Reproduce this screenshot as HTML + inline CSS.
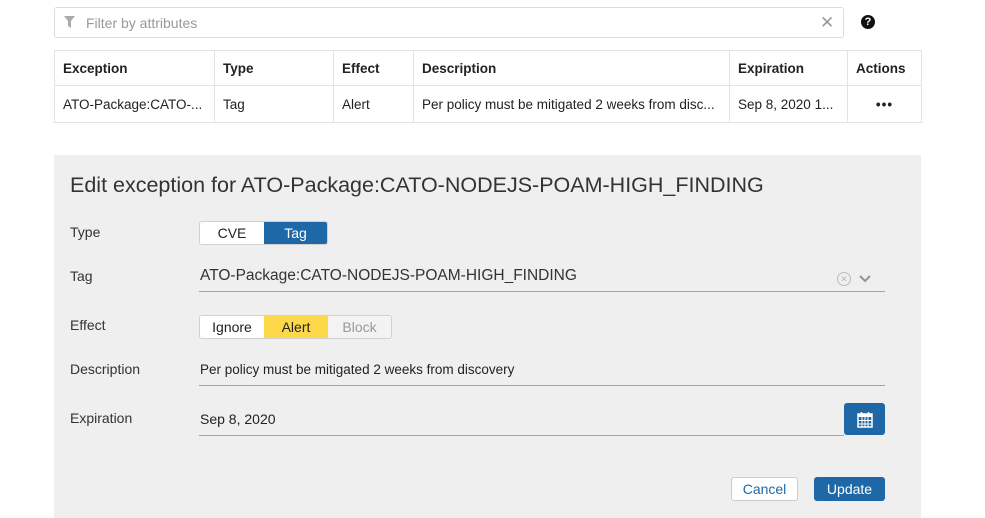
<!DOCTYPE html>
<html><head><style>
*{box-sizing:border-box;margin:0;padding:0}
body{width:985px;height:518px;background:#fff;font-family:"Liberation Sans",sans-serif;color:#222;position:relative;overflow:hidden;font-size:14px}
.a{position:absolute}
.filter{left:54px;top:7px;width:790px;height:31px;border:1px solid #dcdcdc;border-radius:3px}
table{position:absolute;left:54px;top:50px;width:867px;border-collapse:collapse;font-size:13.5px;table-layout:fixed}
td,th{border:1px solid #e3e3e3;padding:0 8px;height:37px;text-align:left;white-space:nowrap;overflow:hidden}
th{font-weight:bold;height:35px}
.panel{left:54px;top:155px;width:867px;height:363px;background:#efefef}
.lbl{left:70px;font-size:14px;color:#333}
.seg{display:flex;border:1px solid #d0d0d0;border-radius:3px;background:#fff;height:24px;font-size:14px;overflow:hidden}
.seg div{display:flex;align-items:center;justify-content:center}
.line{height:1px;background:#9aa5ad;left:199px}
.btn{border-radius:3px;display:flex;align-items:center;justify-content:center;font-size:14px}
</style></head><body>
<div class="a filter"></div>
<svg class="a" style="left:64px;top:16px" width="11" height="12" viewBox="0 0 11 12"><path d="M0 0H11L7 5V12L4 10V5Z" fill="#aaa"/></svg>
<div class="a" style="left:86px;top:15px;color:#999;font-size:14px">Filter by attributes</div>
<div class="a" style="left:820px;top:13px;color:#999;font-size:17px">✕</div>
<div class="a" style="left:861px;top:15px;width:14px;height:14px;border-radius:50%;background:#111;color:#fff;font-size:11px;font-weight:bold;text-align:center;line-height:14px">?</div>
<table>
<colgroup><col style="width:160px"><col style="width:119px"><col style="width:80px"><col style="width:316px"><col style="width:118px"><col style="width:74px"></colgroup>
<tr><th>Exception</th><th>Type</th><th>Effect</th><th>Description</th><th>Expiration</th><th>Actions</th></tr>
<tr><td>ATO-Package:CATO-...</td><td>Tag</td><td>Alert</td><td>Per policy must be mitigated 2 weeks from disc...</td><td>Sep 8, 2020 1...</td><td style="text-align:center;font-weight:bold;letter-spacing:1px">•••</td></tr>
</table>
<div class="a panel"></div>
<div class="a" style="left:70px;top:173px;font-size:21.5px;color:#333">Edit exception for ATO-Package:CATO-NODEJS-POAM-HIGH_FINDING</div>
<div class="a lbl" style="top:224px">Type</div>
<div class="a seg" style="left:199px;top:221px;width:129px"><div style="width:64px">CVE</div><div style="flex:1;background:#1f68a8;color:#fff">Tag</div></div>
<div class="a lbl" style="top:268px">Tag</div>
<div class="a" style="left:200px;top:267px;font-size:15.5px;color:#333">ATO-Package:CATO-NODEJS-POAM-HIGH_FINDING</div>
<div class="a" style="left:837px;top:272px;width:14px;height:14px;border:1px solid #bbb;border-radius:50%;color:#bbb;font-size:9px;text-align:center;line-height:12px">✕</div>
<svg class="a" style="left:859px;top:275px" width="12" height="8"><path d="M1 1L6 6L11 1" stroke="#8a96a0" stroke-width="2" fill="none"/></svg>
<div class="a line" style="top:291px;width:686px"></div>
<div class="a lbl" style="top:317px">Effect</div>
<div class="a seg" style="left:199px;top:315px;width:193px"><div style="width:64px">Ignore</div><div style="width:64px;background:#fdd849">Alert</div><div style="flex:1;color:#999;background:#f3f3f3">Block</div></div>
<div class="a lbl" style="top:361px">Description</div>
<div class="a" style="left:200px;top:362px;font-size:13.5px">Per policy must be mitigated 2 weeks from discovery</div>
<div class="a line" style="top:385px;width:686px"></div>
<div class="a lbl" style="top:410px">Expiration</div>
<div class="a" style="left:200px;top:411px;font-size:14px">Sep 8, 2020</div>
<div class="a line" style="top:435px;width:645px"></div>
<div class="a btn" style="left:844px;top:403px;width:41px;height:32px;background:#1f68a8">
<svg width="16" height="17" viewBox="0 0 16 17"><rect x="1" y="3" width="14" height="13" fill="none" stroke="#fff" stroke-width="1.5"/><rect x="1" y="3" width="14" height="3" fill="#fff"/><path d="M5 6V16M8 6V16M11 6V16M1 9.5H15M1 13H15" stroke="#fff" stroke-width="1"/><path d="M4.5 1V4M11.5 1V4" stroke="#fff" stroke-width="1.5"/></svg></div>
<div class="a btn" style="left:731px;top:477px;width:67px;height:24px;background:#fff;border:1px solid #ccc;color:#1f68a8">Cancel</div>
<div class="a btn" style="left:814px;top:477px;width:71px;height:24px;background:#1f68a8;color:#fff">Update</div>
</body></html>
